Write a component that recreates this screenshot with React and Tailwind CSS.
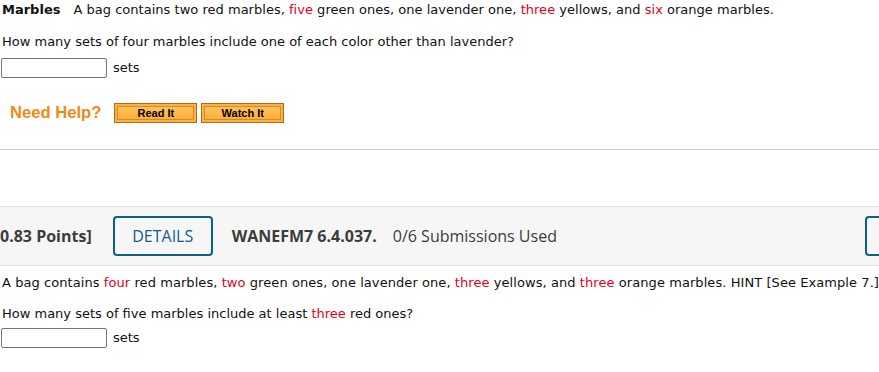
import React from "react";

const Red = ({ children }) => <span className="text-[#e4001b]">{children}</span>;

const HelpButton = ({ label }) => (
  <button className="h-[20px] w-[83px] border border-[#b06a1e] bg-[#fdb23f] p-[2px]">
    <div className="flex h-full items-center justify-center border border-[#d48a2e] bg-gradient-to-b from-[#ffc25a] to-[#fdae3a] text-[11px] font-bold leading-none text-black [font-family:'Liberation_Sans',Arial,sans-serif]">
      {label}
    </div>
  </button>
);

const AnswerRow = () => (
  <div className="flex items-center">
    <input
      type="text"
      className="ml-[1px] h-[20px] w-[106px] rounded-[2px] border border-[#767676] bg-white"
    />
    <span className="ml-[6px]">sets</span>
  </div>
);

export default function App() {
  return (
    <div className="h-[372px] w-[879px] overflow-hidden bg-white text-[13px] text-[#111] [font-family:'DejaVu_Sans',Verdana,sans-serif]">
      <p className="flex h-[20px] items-center whitespace-nowrap pl-[2px]">
        <span className="mr-[13px] font-bold">Marbles</span>
        <span className="tracking-[0.02px]">
          A bag contains two red marbles, <Red>five</Red> green ones, one lavender one, <Red>three</Red> yellows, and{" "}
          <Red>six</Red> orange marbles.
        </span>
      </p>
      <p className="mt-[12px] flex h-[20px] items-center whitespace-nowrap pl-[2px]">
        How many sets of four marbles include one of each color other than lavender?
      </p>
      <div className="mt-[6px]">
        <AnswerRow />
      </div>

      <div className="mt-[25px] flex h-[20px] items-center">
        <span className="ml-[10px] mr-[13px] text-[16.6px] font-bold text-[#f08a16] [font-family:'Liberation_Sans',Arial,sans-serif]">
          Need Help?
        </span>
        <HelpButton label="Read It" />
        <div className="w-[4px]" />
        <HelpButton label="Watch It" />
      </div>

      <div className="mt-[26px] border-t border-[#c8c8c8]" />

      <div className="mt-[56px] flex h-[60px] items-center overflow-hidden whitespace-nowrap border-y border-[#e2e2e2] bg-[#f6f6f6] text-[16px] text-[#3c3c3c] [font-family:'Open_Sans',sans-serif]">
        <span className="font-bold">0.83 Points]</span>
        <button className="ml-[21px] h-[40px] w-[100px] shrink-0 rounded-[4px] border-2 border-[#0b5f93] text-[16px] text-[#0b5f93]">
          DETAILS
        </button>
        <span className="ml-[19px] font-bold">WANEFM7 6.4.037.</span>
        <span className="ml-[16px]">0/6 Submissions Used</span>
        <div className="ml-auto h-[40px] w-[100px] shrink-0 translate-x-[86px] rounded-[4px] border-2 border-[#0b5f93]" />
      </div>

      <p className="mt-[7px] flex h-[20px] items-center whitespace-nowrap pl-[2px] tracking-[0.07px]">
        <span>
          A bag contains <Red>four</Red> red marbles, <Red>two</Red> green ones, one lavender one, <Red>three</Red> yellows,
          and <Red>three</Red> orange marbles. HINT [See Example 7.]
        </span>
      </p>
      <p className="mt-[11px] flex h-[20px] items-center whitespace-nowrap pl-[2px]">
        <span>
          How many sets of five marbles include at least <Red>three</Red> red ones?
        </span>
      </p>
      <div className="mt-[4px]">
        <AnswerRow />
      </div>
    </div>
  );
}
